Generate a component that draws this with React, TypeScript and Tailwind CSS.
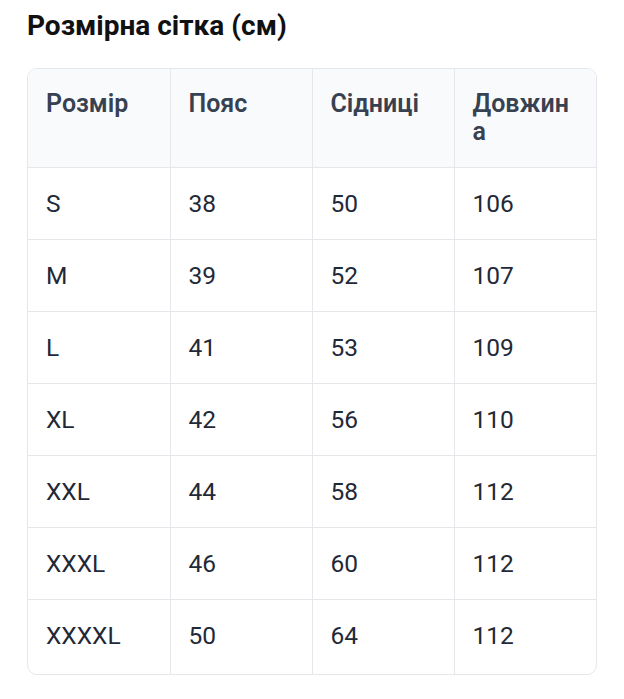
import React from 'react';

const headers = ['Розмір', 'Пояс', 'Сідниці', 'Довжина'];

const rows: [string, number, number, number][] = [
  ['S', 38, 50, 106],
  ['M', 39, 52, 107],
  ['L', 41, 53, 109],
  ['XL', 42, 56, 110],
  ['XXL', 44, 58, 112],
  ['XXXL', 46, 60, 112],
  ['XXXXL', 50, 64, 112],
];

export default function App() {
  return (
    <div className="min-h-screen bg-white px-[27px] pt-[10px] font-['Roboto',sans-serif]">
      <h2 className="text-[28px] leading-[32px] font-bold text-[#111111]">Розмірна сітка (см)</h2>

      <div className="mt-[26px] overflow-hidden rounded-[10px] border border-[#e5e7eb]">
        <table className="w-full table-fixed border-collapse">
          <thead>
            <tr className="bg-[#f9fafb]">
              {headers.map((h, i) => (
                <th
                  key={h}
                  className={`pl-[18px] pr-5 py-[21px] text-left align-top text-[25px] leading-[28px] font-semibold text-[#374151] break-all ${
                    i > 0 ? 'border-l border-[#e5e7eb]' : ''
                  }`}
                >
                  {h}
                </th>
              ))}
            </tr>
          </thead>
          <tbody>
            {rows.map((r, ri) => (
              <tr key={r[0]} className="border-t border-[#e5e7eb]">
                {r.map((c, i) => (
                  <td
                    key={i}
                    className={`pl-[18px] pr-5 text-[24.5px] leading-[28px] text-[#1f2937] ${
                      ri === rows.length - 1 ? 'pt-[21.5px] pb-[24px]' : 'py-[21.5px]'
                    } ${i > 0 ? 'border-l border-[#e5e7eb]' : ''}`}
                  >
                    {c}
                  </td>
                ))}
              </tr>
            ))}
          </tbody>
        </table>
      </div>
    </div>
  );
}
